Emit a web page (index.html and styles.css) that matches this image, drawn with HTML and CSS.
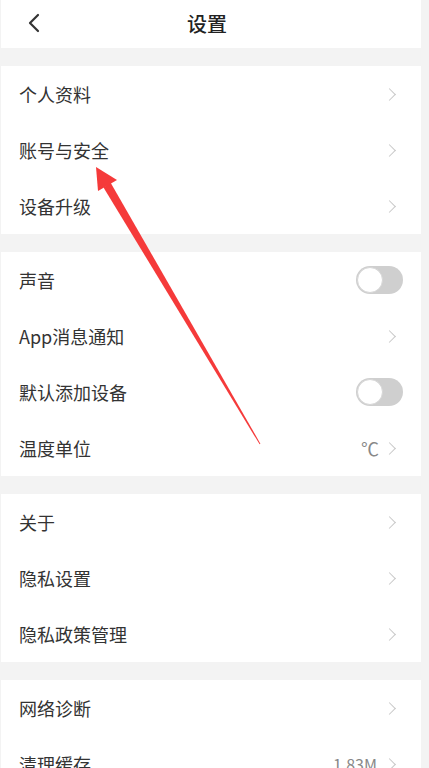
FILE: index.html
```html
<!DOCTYPE html>
<html lang="zh-CN">
<head>
    <meta charset="UTF-8">
    <meta name="viewport" content="width=device-width, initial-scale=1.0">
    <title>设置</title>
    <link rel="stylesheet" href="styles.css">
</head>
<body>
    <div class="screen">
        <!-- Top bar -->
        <header class="topbar">
            <svg class="back" width="14" height="20" viewBox="0 0 14 20">
                <path d="M11 2 L3 10 L11 18" fill="none" stroke="#333" stroke-width="2.2" stroke-linecap="round" stroke-linejoin="round"/>
            </svg>
            <h1>设置</h1>
        </header>

        <section class="group">
            <div class="row"><span class="label">个人资料</span><span class="chev"></span></div>
            <div class="row"><span class="label">账号与安全</span><span class="chev"></span></div>
            <div class="row"><span class="label">设备升级</span><span class="chev"></span></div>
        </section>

        <section class="group">
            <div class="row"><span class="label">声音</span><span class="switch"></span></div>
            <div class="row"><span class="label">App消息通知</span><span class="chev"></span></div>
            <div class="row"><span class="label">默认添加设备</span><span class="switch"></span></div>
            <div class="row"><span class="label">温度单位</span><span class="value unit">℃</span><span class="chev"></span></div>
        </section>

        <section class="group">
            <div class="row"><span class="label">关于</span><span class="chev"></span></div>
            <div class="row"><span class="label">隐私设置</span><span class="chev"></span></div>
            <div class="row"><span class="label">隐私政策管理</span><span class="chev"></span></div>
        </section>

        <section class="group">
            <div class="row"><span class="label">网络诊断</span><span class="chev"></span></div>
            <div class="row"><span class="label">清理缓存</span><span class="value">1.83M</span><span class="chev"></span></div>
        </section>

        <!-- Red annotation arrow drawn over the list -->
        <svg class="pointer" width="429" height="768" viewBox="0 0 429 768">
            <polygon points="110.5,182.5 103.5,187.5 259.6,444.3 260.4,443.7" fill="#f53a3a"/>
            <polygon points="96,167 117,180 98,191" fill="#f53a3a"/>
        </svg>
    </div>
</body>
</html>
```

FILE: styles.css
```css
/* Page */
body {
    margin: 0;
    background-color: #f3f3f3;
    font-family: "Noto Sans CJK SC", "Noto Sans", sans-serif;
    color: #333;
}

.screen {
    position: relative;
    width: 429px;
    height: 768px;
    overflow: hidden;
}

/* Top bar */
.topbar {
    display: flex;
    align-items: center;
    justify-content: center;
    position: relative;
    height: 48px;
    margin: 0 8px 18px 1px;
    background-color: #fff;
}

.topbar .back {
    position: absolute;
    left: 26px;
    top: 13px;
}

.topbar h1 {
    margin: 0 8px 0 0;
    font-size: 20px;
    font-weight: 500;
    color: #222;
    line-height: 1;
}

/* Groups of rows */
.group {
    display: flex;
    flex-direction: column;
    margin: 0 8px 18px 1px;
    background-color: #fff;
}

.row {
    display: flex;
    align-items: center;
    height: 56px;
    padding: 0 24px 0 18px;
}

.label {
    flex: 1;
    font-size: 18px;
    line-height: 1;
    color: #333;
}

.value {
    margin-right: 8px;
    font-size: 16px;
    color: #888;
}

.value.unit {
    font-size: 18px;
    margin-right: 6px;
}

/* Chevron */
.chev {
    width: 8px;
    height: 8px;
    margin-right: 3px;
    border-top: 1.5px solid #c8c8c8;
    border-right: 1.5px solid #c8c8c8;
    transform: rotate(45deg);
}

/* Toggle switch (off) */
.switch {
    position: relative;
    width: 47px;
    height: 28px;
    margin-right: -6px;
    border-radius: 14px;
    background-color: #cfcfcf;
}

.switch::after {
    content: "";
    position: absolute;
    left: 1px;
    top: 1px;
    width: 26px;
    height: 26px;
    border-radius: 50%;
    background-color: #fff;
    box-sizing: border-box;
    border: 1px solid #d6d6d6;
}

/* Annotation overlay */
.pointer {
    position: absolute;
    left: 0;
    top: 0;
    pointer-events: none;
}
```
